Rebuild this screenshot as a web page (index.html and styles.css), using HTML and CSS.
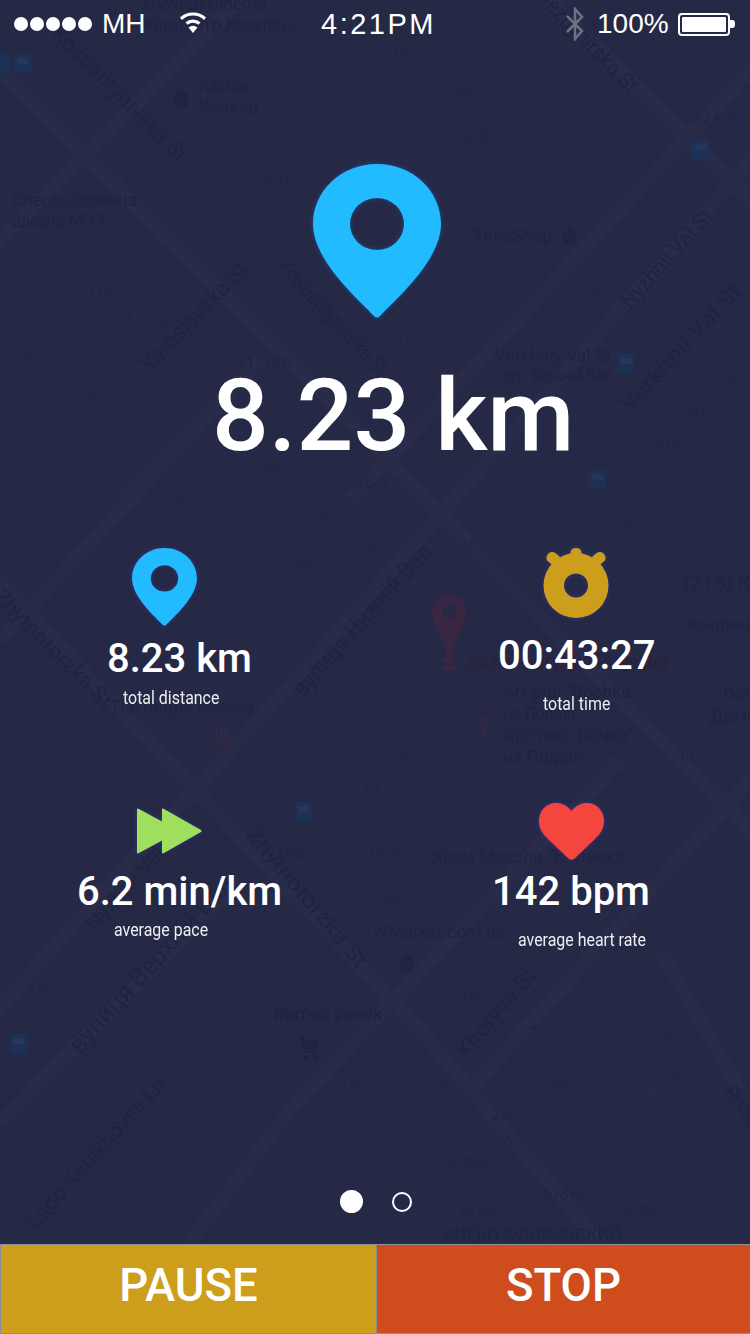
FILE: index.html
```html
<!DOCTYPE html>
<html lang="en">
<head>
  <meta charset="UTF-8">
  <title>Run tracker</title>
  <link rel="stylesheet" href="styles.css">
</head>
<body>
<div class="screen">
  <!-- map behind everything -->
  <svg class="map" viewBox="0 0 750 1334" width="750" height="1334">
    <g class="roads">
      <path d="M-20 50 L330 400 L640 720 L800 880"/>
      <path d="M260 -20 L-60 300"/>
      <path d="M760 150 L330 640 L60 940 L-20 1030"/>
      <path d="M530 -20 L760 210"/>
      <path d="M-20 560 L420 1030 L640 1290"/>
      <path d="M620 760 L290 1110 L120 1334"/>
      <path d="M0 1123 L240 880"/>
      <path d="M120 500 L260 360 L0 640"/>
      <path d="M350 500 L760 60"/>
      <path d="M470 1090 L750 780"/>
      <path d="M660 950 L740 1090"/>
      <path class="thin" d="M100 120 C 110 170 150 230 165 245"/>
      <path class="thin" d="M520 1000 L690 830 L600 750"/>
      <path class="thin" d="M380 1240 L540 1070"/>
      <path class="thin" d="M540 1210 L700 1040"/>
      <path class="thin" d="M470 540 L640 720 L700 670"/>
      <path class="thin" d="M560 1000 L660 1100"/>
    </g>
    <g class="labels">
      <text x="199" y="92" textLength="51" lengthAdjust="spacingAndGlyphs">Karkar</text>
      <text x="199" y="113" textLength="59" lengthAdjust="spacingAndGlyphs">Каркар</text>
      <text x="141" y="10" textLength="126" lengthAdjust="spacingAndGlyphs">Znovten Cinema</text>
      <text x="143" y="31" textLength="153" lengthAdjust="spacingAndGlyphs">Кінотеатр Жовтень</text>
      <text x="12" y="206" textLength="125" lengthAdjust="spacingAndGlyphs">Спеціалізована</text>
      <text x="12" y="227" textLength="94" lengthAdjust="spacingAndGlyphs">школа №17</text>
      <text x="473" y="242" textLength="79" lengthAdjust="spacingAndGlyphs">TimeShop</text>
      <text x="495" y="362" textLength="116" lengthAdjust="spacingAndGlyphs">Verkhniy Val St</text>
      <text x="502" y="381" textLength="109" lengthAdjust="spacingAndGlyphs">вул. Верхній Вал</text>
      <text x="683" y="589" textLength="80" lengthAdjust="spacingAndGlyphs">(215) Ко</text>
      <text class="small" x="687" y="630" textLength="66" lengthAdjust="spacingAndGlyphs">Контракт</text>
      <text class="dark" x="467" y="669" textLength="203" lengthAdjust="spacingAndGlyphs">дизайн-студия Projector</text>
      <text x="503" y="698" textLength="133" lengthAdjust="spacingAndGlyphs">Art-pub "Bochka"</text>
      <text x="503" y="720" textLength="72" lengthAdjust="spacingAndGlyphs">на Подолі</text>
      <text x="503" y="741" textLength="131" lengthAdjust="spacingAndGlyphs">Арт-паб "Бочка"</text>
      <text x="503" y="763" textLength="79" lengthAdjust="spacingAndGlyphs">на Подолі</text>
      <text x="723" y="700" textLength="36" lengthAdjust="spacingAndGlyphs">Dom</text>
      <text x="710" y="722" textLength="42" lengthAdjust="spacingAndGlyphs">Домі</text>
      <text x="110" y="713" textLength="143" lengthAdjust="spacingAndGlyphs">The Burger Mexico</text>
      <text x="432" y="863" textLength="193" lengthAdjust="spacingAndGlyphs">Храм Миколи Притиска</text>
      <text x="373" y="938" textLength="132" lengthAdjust="spacingAndGlyphs">WMarket.com.ua</text>
      <text class="semi" x="273" y="1020" textLength="109" lengthAdjust="spacingAndGlyphs">Житній ринок</text>
      <text x="443" y="1241" textLength="179" lengthAdjust="spacingAndGlyphs">КИЕВО-ФЛОРОВСКИЙ</text>
      <text class="num" x="463" y="142">206</text>
      <text class="num" x="390" y="58">19</text>
      <text class="num" x="455" y="95">20</text>
      <text class="num" x="137" y="182">27</text>
      <text class="num" x="264" y="187">22/17</text>
      <text class="num" x="170" y="217">25</text>
      <text class="num" x="592" y="295">20</text>
      <text class="num" x="86" y="298">118</text>
      <text class="num" x="124" y="320">11</text>
      <text class="num" x="149" y="332">13</text>
      <text class="num" x="395" y="343">16</text>
      <text class="num" x="22" y="360">4</text>
      <text class="num" x="236" y="368">21/12Б</text>
      <text class="num" x="722" y="383">32</text>
      <text class="num" x="70" y="405">2/9</text>
      <text class="num" x="686" y="417">30</text>
      <text class="num" x="651" y="451">30A</text>
      <text class="num" x="253" y="475">19Б</text>
      <text class="num" x="345" y="488">23Б</text>
      <text class="num" x="380" y="488">17</text>
      <text class="num" x="175" y="505">6</text>
      <text class="num" x="305" y="523">23Г</text>
      <text class="num" x="596" y="533">12/8</text>
      <text class="num" x="368" y="556">22</text>
      <text class="num" x="285" y="570">23В</text>
      <text class="num" x="338" y="590">21</text>
      <text class="num" x="266" y="687">19</text>
      <text class="num" x="391" y="762">20</text>
      <text class="num" x="677" y="760">11</text>
      <text class="num" x="361" y="795">18</text>
      <text class="num" x="276" y="860">16A</text>
      <text class="num" x="366" y="858">16/4</text>
      <text class="num" x="384" y="903">3A</text>
      <text class="num" x="352" y="943">16</text>
      <text class="num" x="490" y="966">1</text>
      <text class="num" x="28" y="996">15</text>
      <text class="num" x="460" y="1000">1A</text>
      <text class="num" x="610" y="990">4</text>
      <text class="num" x="658" y="1038">9а</text>
      <text class="num" x="528" y="1038">2</text>
      <text class="num" x="668" y="1083">7Б</text>
      <text class="num" x="546" y="1088">2A</text>
      <text class="num" x="440" y="1090">6</text>
      <text class="num" x="340" y="1093">16</text>
      <text class="num" x="492" y="1120">2Б</text>
      <text class="num" x="712" y="1122">7</text>
      <text class="num" x="504" y="1147">5</text>
      <text class="num" x="447" y="1169">6/8K6</text>
      <text class="num" x="8" y="1183">10</text>
      <text class="num" x="543" y="1200">6/8K4</text>
      <text class="num" x="460" y="1215">6/8K5</text>
      <text class="num" x="623" y="1217">6/8K2</text>
      <text class="num" x="692" y="125">37/20</text>
      <text class="rot" transform="translate(50 35) rotate(45)" textLength="182" lengthAdjust="spacingAndGlyphs">Kostiantynivska St</text>
      <text class="rot" transform="translate(532 -6) rotate(46)" textLength="140" lengthAdjust="spacingAndGlyphs">Mezhyhirska St</text>
      <text class="rot" transform="translate(277 268) rotate(47)" textLength="150" lengthAdjust="spacingAndGlyphs">Kostiantynivska St</text>
      <text class="rot" transform="translate(150 373) rotate(-46)" textLength="142" lengthAdjust="spacingAndGlyphs">Yaroslavska St</text>
      <text class="rot" transform="translate(630 310) rotate(-48)" textLength="125" lengthAdjust="spacingAndGlyphs">Nyzhnii Val St</text>
      <text class="rot" transform="translate(630 413) rotate(-47)" textLength="165" lengthAdjust="spacingAndGlyphs">Verkhnii Val St</text>
      <text class="rot big" transform="translate(303 698) rotate(-48)" textLength="195" lengthAdjust="spacingAndGlyphs">вулиця Нижній Вал</text>
      <text class="rot" transform="translate(-8 598) rotate(45)" textLength="158" lengthAdjust="spacingAndGlyphs">Zhytnotorzka St</text>
      <text class="rot" transform="translate(95 932) rotate(-48)" textLength="130" lengthAdjust="spacingAndGlyphs">Nyzhnii Val St</text>
      <text class="rot big" transform="translate(80 1055) rotate(-48)" textLength="230" lengthAdjust="spacingAndGlyphs">вулиця Верхній Вал</text>
      <text class="rot" transform="translate(245 835) rotate(50)" textLength="175" lengthAdjust="spacingAndGlyphs">Zhytnotorzka St</text>
      <text class="rot" transform="translate(466 1060) rotate(-50)" textLength="110" lengthAdjust="spacingAndGlyphs">Khoryva St</text>
      <text class="rot" transform="translate(36 1230) rotate(-48)" textLength="195" lengthAdjust="spacingAndGlyphs">Lado Ketskhoveli Ln</text>
      <text class="rot" transform="translate(722 1092) rotate(55)" textLength="100" lengthAdjust="spacingAndGlyphs">Prytyska St</text>
      <text class="metro" x="569" y="430">M</text>
      <text class="metro" x="687" y="474">M</text>
      <text class="metro" x="462" y="549">M</text>
      <text class="metro" x="430" y="488">M</text>
    </g>
    <!-- faded pin under the stats -->
    <path class="map-pin" fill-rule="evenodd" d="M449 594c10 0 17 8 17 18 0 14-13 28-17 52-4-24-17-38-17-52 0-10 7-18 17-18zm0 11a6.500 6.500 0 1 0 0 14 6.500 6.500 0 1 0 0-14z"/>
    <path class="map-pin" d="M440 660l9-5 9 5-9 5zM442 666h14v4q-7 4-14 0z"/>
    <!-- small place icons -->
    <path class="map-shop" d="M174 93h14v14h-14zM178 93q3-9 6 0h-2q-1-4-2 0zM400 958h13v13h-13zM404 958q3-8 6 0h-2q-1-4-2 0zM563 232h13v13h-13zM567 232q3-8 6 0h-2q-1-4-2 0z"/>
    <path class="map-cart" d="M298 1036h5l2 5h14l-3 8h-10l-1 2h12v2h-15l2-4-4-11h-2zM304 1056h4v4h-4zM313 1056h4v4h-4z"/>
    <path class="map-red" d="M477 718h15l-6 9v7h4v2h-11v-2h4v-7zM216 728h2v9h2v-9h2v11h-2v12h-2v-12h-2zM225 728h3v23h-2v-9h-2z"/>
    <g class="map-bus">
      <rect x="295" y="802" width="17" height="19" rx="3"/>
      <rect x="692" y="140" width="17" height="19" rx="3"/>
      <rect x="617" y="354" width="17" height="19" rx="3"/>
      <rect x="589" y="470" width="17" height="19" rx="3"/>
      <rect x="10" y="1034" width="17" height="19" rx="3"/>
      <rect x="14" y="54" width="17" height="19" rx="3"/>
      <rect x="-8" y="54" width="17" height="19" rx="3"/>
    </g>
    <g class="map-bus-win">
      <rect x="298" y="806" width="11" height="6"/>
      <rect x="695" y="144" width="11" height="6"/>
      <rect x="620" y="358" width="11" height="6"/>
      <rect x="592" y="474" width="11" height="6"/>
      <rect x="13" y="1038" width="11" height="6"/>
      <rect x="17" y="58" width="11" height="6"/>
    </g>
  </svg>

  <div class="status-bar">
    <div class="status-left">
      <div class="signal">
        <span class="dot"></span><span class="dot"></span><span class="dot"></span><span class="dot"></span><span class="dot"></span>
      </div>
      <span class="carrier">MH</span>
      <svg class="wifi" viewBox="0 0 28 22" width="28" height="22">
        <path d="M14 22l-4.500-5.500a7 7 0 0 1 9 0z"/>
        <path d="M14 8.500a12 12 0 0 1 7.500 2.800l-2 2.500a9 9 0 0 0-11 0l-2-2.500A12 12 0 0 1 14 8.500z"/>
        <path d="M14 1.500a19 19 0 0 1 13 5l-2 2.500a16 16 0 0 0-22 0L1 6.500a19 19 0 0 1 13-5z"/>
      </svg>
    </div>
    <div class="status-time">4:21PM</div>
    <div class="status-right">
      <svg class="bt" viewBox="0 0 20 34" width="20" height="34">
        <path d="M2 9l15 15-7 8V2l7 8L2 25" fill="none" stroke="#6e7180" stroke-width="2.500"/>
      </svg>
      <span class="battery-text">100%</span>
      <div class="battery"><div class="battery-fill"></div></div>
      <div class="battery-nub"></div>
    </div>
  </div>

  <div class="hero">
    <svg class="hero-pin" viewBox="0 0 128 154" width="128" height="154">
      <path class="pin" fill-rule="evenodd" d="M64 0C100 0 128 27 128 60C128 96 84 134 67 152Q64 155 61 152C44 134 0 96 0 60C0 27 28 0 64 0ZM64 34A27 26 0 1 0 64 86A27 26 0 1 0 64 34Z"/>
    </svg>
    <div class="hero-value">8.23 km</div>
  </div>

  <div class="stats">
    <div class="stat stat-distance">
      <svg class="stat-icon" viewBox="0 0 128 154" width="65" height="78">
        <path class="pin" fill-rule="evenodd" d="M64 0C100 0 128 27 128 60C128 96 84 134 67 152Q64 155 61 152C44 134 0 96 0 60C0 27 28 0 64 0ZM64 34A27 26 0 1 0 64 86A27 26 0 1 0 64 34Z"/>
      </svg>
      <div class="stat-value">8.23 km</div>
      <div class="stat-label">total distance</div>
    </div>
    <div class="stat stat-time">
      <svg class="stat-icon" viewBox="0 0 66 70" width="66" height="70">
        <g class="watch">
          <rect x="27.500" y="0" width="11" height="14" rx="5"/>
          <rect x="5" y="4" width="11" height="15" rx="5" transform="rotate(-50 10 11)"/>
          <rect x="50" y="4" width="11" height="15" rx="5" transform="rotate(50 56 11)"/>
          <path fill-rule="evenodd" d="M33 5a32.500 32.500 0 1 0 0 65a32.500 32.500 0 1 0 0-65zM33 25.500a12 12 0 1 1 0 24a12 12 0 1 1 0-24z"/>
        </g>
      </svg>
      <div class="stat-value">00:43:27</div>
      <div class="stat-label">total time</div>
    </div>
    <div class="stat stat-pace">
      <svg class="stat-icon" viewBox="0 0 65 46" width="65" height="46">
        <g class="arrows">
          <path d="M0 1.500Q0 0 1.500 .8L26 14V32L1.500 45.200Q0 46 0 44.500Z"/>
          <path d="M25 1.500Q25 0 26.500 .8L64 22Q65 23 64 24L26.500 45.200Q25 46 25 44.500Z"/>
        </g>
      </svg>
      <div class="stat-value">6.2 min/km</div>
      <div class="stat-label">average pace</div>
    </div>
    <div class="stat stat-heart">
      <svg class="stat-icon" viewBox="0 0 65 57" width="65" height="57">
        <path class="heart" d="M32.500 8C28 2.500 23 0 17 0C7 0 0 8 0 18C0 26 4 31 9 36L29.500 55.500Q32.500 58 35.500 55.500L56 36C61 31 65 26 65 18C65 8 58 0 48 0C42 0 37 2.500 32.500 8Z"/>
      </svg>
      <div class="stat-value">142 bpm</div>
      <div class="stat-label">average heart rate</div>
    </div>
  </div>

  <div class="pager">
    <span class="pager-dot active"></span>
    <span class="pager-dot"></span>
  </div>

  <div class="actions">
    <div class="btn btn-pause">PAUSE</div>
    <div class="btn btn-stop">STOP</div>
  </div>
</div>
</body>
</html>
```

FILE: styles.css
```css
* {
  margin: 0;
  padding: 0;
  box-sizing: border-box;
}
body {
  width: 750px;
  height: 1334px;
  overflow: hidden;
  background-color: #252946;
  font-family: Roboto, "Noto Sans CJK SC", sans-serif;
  color: #fff;
}
.screen {
  width: 750px;
  height: 1334px;
  position: relative;
  display: flex;
  flex-direction: column;
  overflow: hidden;
}
.map {
  position: absolute;
  left: 0;
  top: 0;
}
.roads path {
  fill: none;
  stroke: #282c49;
  stroke-width: 14;
}
.roads path.thin {
  stroke-width: 2;
}
.labels text {
  font-family: Roboto, sans-serif;
  font-size: 19px;
  fill: #1f2442;
}
.labels .small {
  font-size: 16px;
}
.labels .num {
  font-size: 17px;
  fill: #212643;
}
.labels .dark {
  font-weight: 700;
  font-size: 22px;
  fill: #2a2240;
}
.labels .semi {
  font-weight: 500;
  fill: #1f2442;
}
.labels .rot {
  font-size: 22px;
  fill: #1f2442;
}
.labels .big {
  font-size: 25px;
}
.labels .metro {
  font-size: 13px;
  font-weight: 700;
  fill: #1d2a50;
}
.map-pin {
  fill: #382643;
}
.map-shop,
.map-cart {
  fill: #1f2442;
}
.map-red {
  fill: #332743;
}
.map-bus {
  fill: #1d3157;
}
.map-bus-win {
  fill: #27375c;
}

/* status bar */
.status-bar {
  height: 48px;
  display: flex;
  align-items: center;
  position: relative;
  font-family: "Liberation Sans", sans-serif;
  font-size: 28px;
}
.status-left {
  width: 316px;
  padding-left: 14px;
  display: flex;
  align-items: center;
}
.signal {
  display: flex;
  gap: 2px;
}
.dot {
  width: 14px;
  height: 14px;
  border-radius: 50%;
  background-color: #fff;
}
.carrier {
  margin-left: 10px;
}
.wifi {
  margin-left: 33px;
  margin-top: -4px;
  fill: #fff;
}
.status-time {
  width: 240px;
  padding-left: 5px;
  font-size: 29px;
  letter-spacing: 2.500px;
}
.status-right {
  flex: 1;
  display: flex;
  align-items: center;
}
.bt {
  margin-left: 9px;
}
.battery-text {
  margin-left: 12px;
}
.battery {
  width: 52px;
  height: 23px;
  margin-left: 9px;
  border: 2px solid #fff;
  border-radius: 4px;
  padding: 2px;
}
.battery-fill {
  height: 100%;
  background-color: #fff;
  border-radius: 1px;
}
.battery-nub {
  width: 5px;
  height: 8px;
  background-color: #fff;
  border-radius: 0 3px 3px 0;
}

/* big distance */
.hero {
  position: relative;
  padding-top: 116px;
  padding-bottom: 35px;
  display: flex;
  flex-direction: column;
}
.hero-pin {
  margin-left: 313px;
  filter: drop-shadow(0 0 2px rgba(34, 120, 255, .4));
}
.hero-value {
  margin-left: 212px;
  margin-top: 39px;
  font-size: 100px;
  font-weight: 500;
  line-height: 118px;
  white-space: nowrap;
}
.pin {
  fill: #22bbff;
}
.watch {
  fill: #cc9e1c;
}
.arrows {
  fill: #9fdf5e;
}
.heart {
  fill: #f4463e;
}

/* stats */
.stats {
  position: relative;
  display: grid;
  grid-template-columns: 375px 375px;
}
.stat {
  display: flex;
  flex-direction: column;
  align-items: flex-start;
}
.stat-value {
  font-size: 40px;
  font-weight: 500;
  line-height: 47px;
  white-space: nowrap;
}
.stat-label {
  font-size: 18px;
  line-height: 22px;
  color: #eceef2;
  white-space: nowrap;
  transform: scaleX(.885);
  transform-origin: left center;
}
.stat-icon {
  filter: drop-shadow(0 0 2px rgba(70, 60, 200, .5));
}
.stat-distance {
  padding-top: 38px;
  height: 254px;
}
.stat-distance .stat-icon {
  margin-left: 132px;
}
.stat-distance .stat-value {
  margin-left: 107px;
  margin-top: 9px;
}
.stat-distance .stat-label {
  margin-left: 123px;
  margin-top: 5px;
}
.stat-time {
  padding-top: 38px;
}
.stat-time .stat-icon {
  margin-left: 168px;
}
.stat-time .stat-value {
  margin-left: 123px;
  margin-top: 14px;
}
.stat-time .stat-label {
  margin-left: 168px;
  margin-top: 14px;
}
.stat-pace {
  padding-top: 44px;
}
.stat-pace .stat-icon {
  margin-left: 137px;
}
.stat-pace .stat-value {
  margin-left: 77px;
  margin-top: 14px;
}
.stat-pace .stat-label {
  margin-left: 114px;
  margin-top: 4px;
}
.stat-heart {
  padding-top: 39px;
}
.stat-heart .stat-icon {
  margin-left: 164px;
}
.stat-heart .stat-value {
  margin-left: 117px;
  margin-top: 8px;
}
.stat-heart .stat-label {
  margin-left: 143px;
  margin-top: 14px;
}

/* pager */
.pager {
  position: relative;
  margin-top: auto;
  height: 23px;
  margin-bottom: 31px;
  padding-left: 340px;
  display: flex;
  align-items: center;
  gap: 29px;
}
.pager-dot {
  width: 20px;
  height: 20px;
  border: 2px solid #fff;
  border-radius: 50%;
}
.pager-dot.active {
  width: 23px;
  height: 23px;
  background-color: #fff;
}

/* buttons */
.actions {
  position: relative;
  height: 90px;
  display: flex;
  border-top: 1px solid #8c8f96;
  border-bottom: 1px solid #8c8f96;
  border-left: 1px solid #8c8f96;
}
.btn {
  height: 100%;
  display: flex;
  align-items: center;
  justify-content: center;
  padding-bottom: 8px;
  font-size: 45.500px;
  font-weight: 500;
}
.btn-pause {
  width: 376px;
  background-color: #cc9e1c;
  border-right: 1px solid #8c8f96;
}
.btn-stop {
  flex: 1;
  background-color: #cf4d1d;
}
```
